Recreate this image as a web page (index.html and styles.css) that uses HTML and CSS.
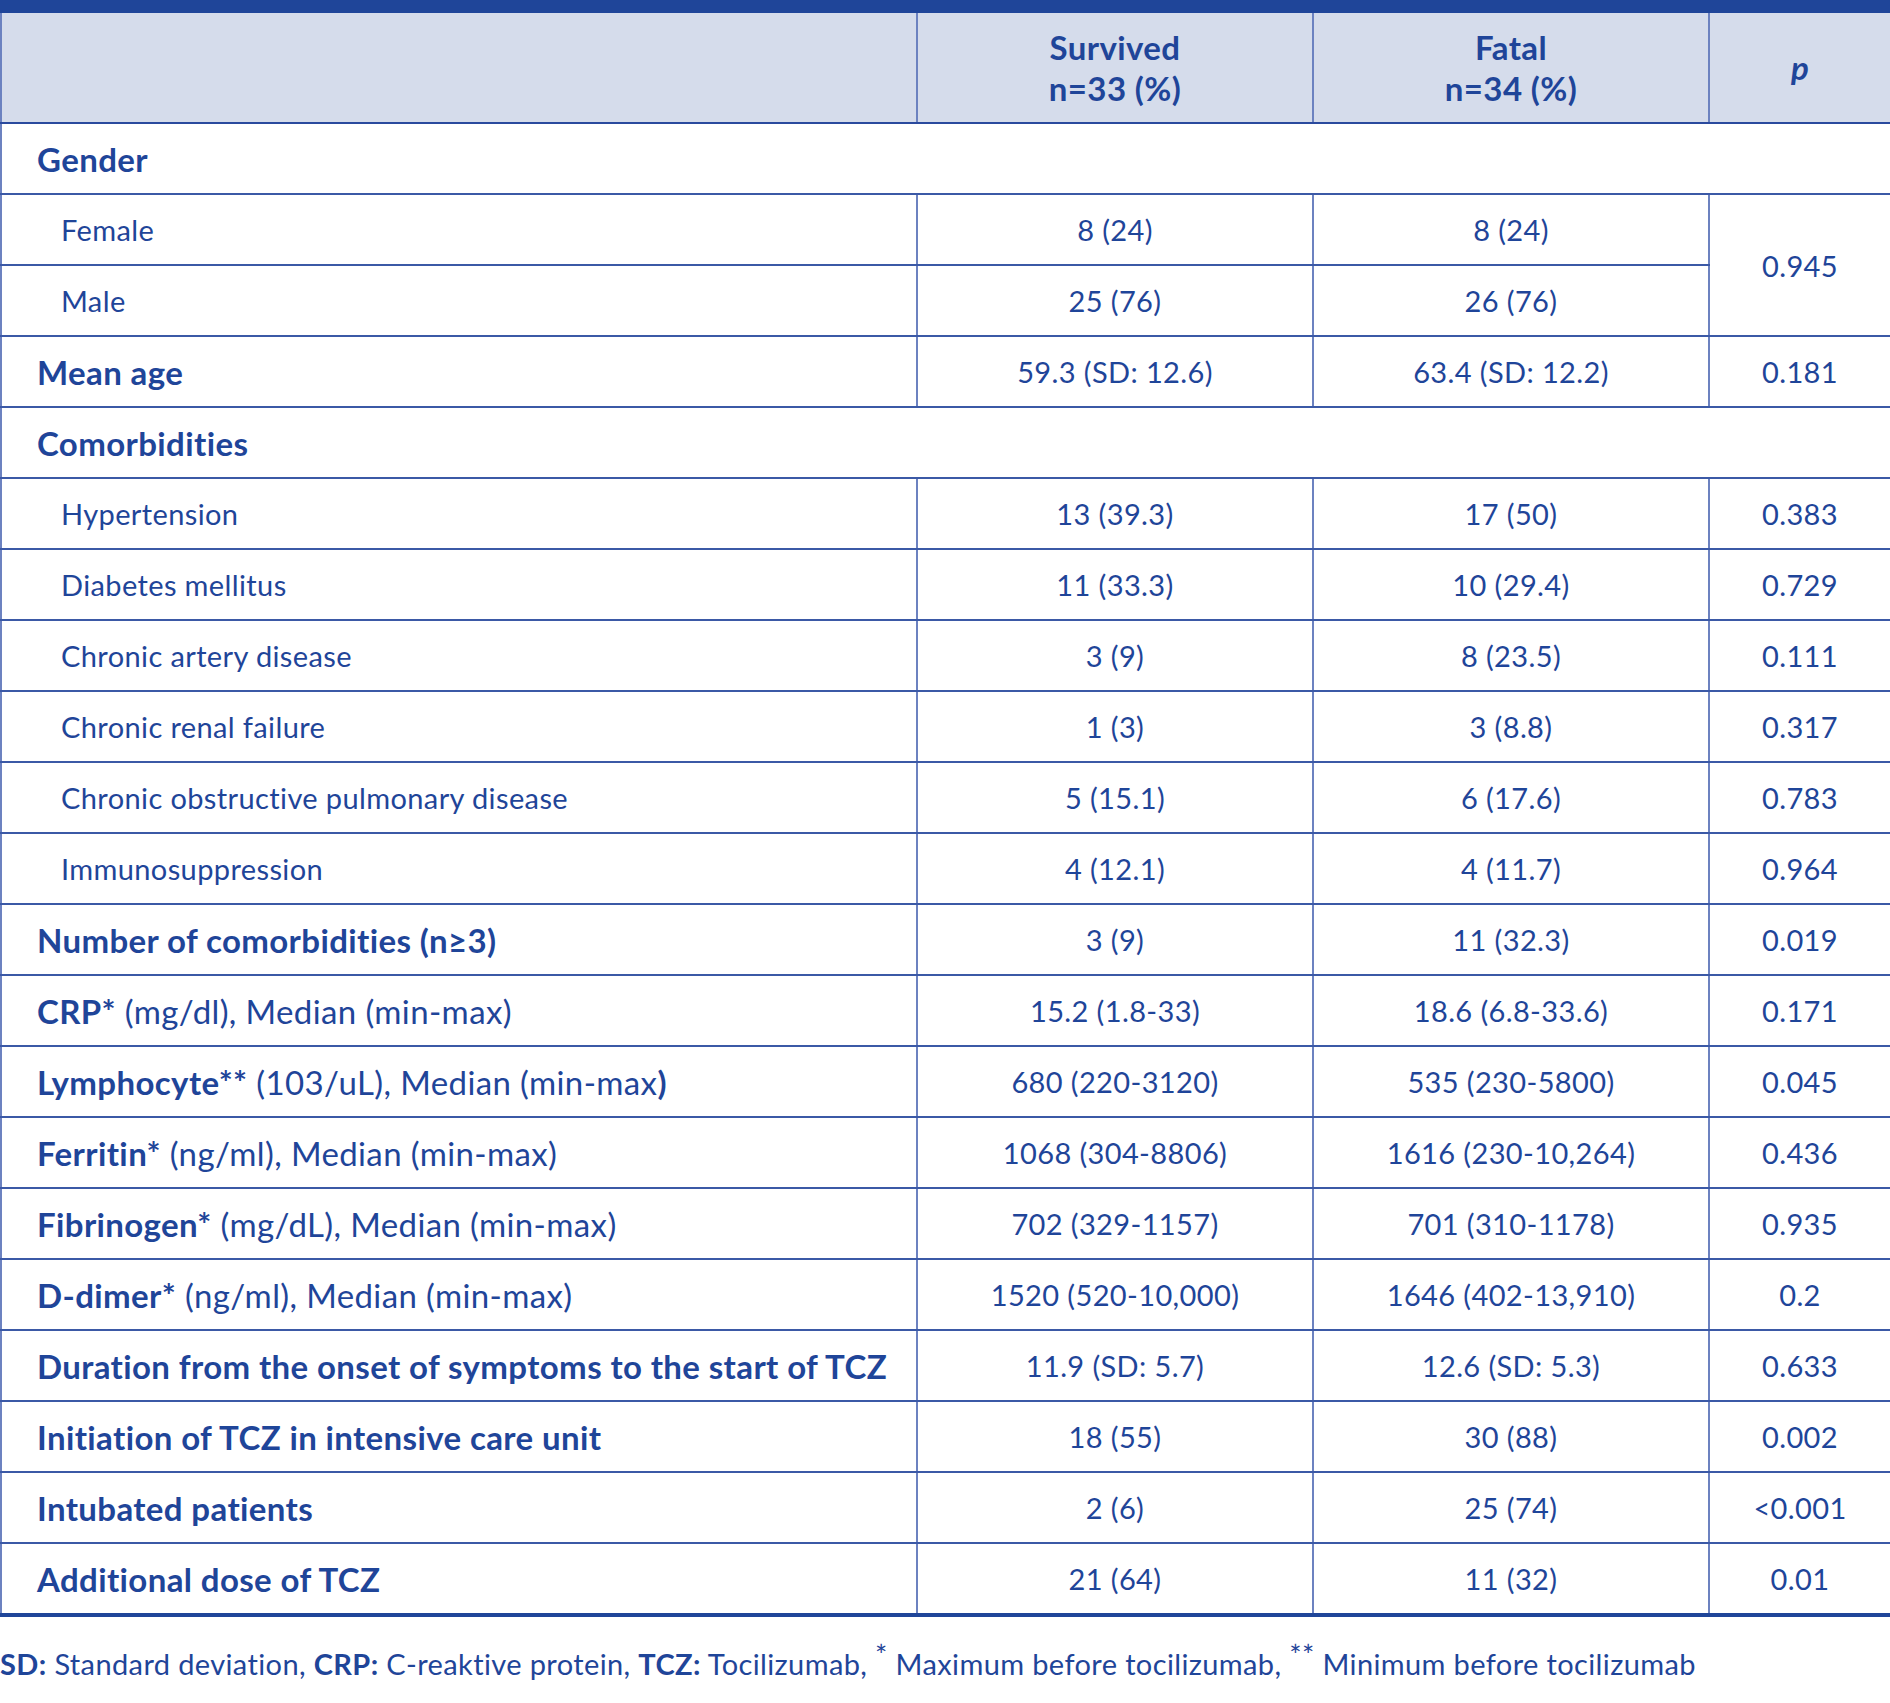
FILE: index.html
```html
<!DOCTYPE html>
<html lang="en">
<head>
<meta charset="utf-8">
<title>Table</title>
<link rel="stylesheet" href="styles.css">
</head>
<body>
<table class="tbl">
  <colgroup>
    <col class="c-label">
    <col class="c-val">
    <col class="c-val">
    <col class="c-p">
  </colgroup>
  <thead>
    <tr>
      <th></th>
      <th>Survived<br>n=33 (%)</th>
      <th>Fatal<br>n=34 (%)</th>
      <th><i>p</i></th>
    </tr>
  </thead>
  <tbody>
    <tr><td class="lbl b" colspan="4">Gender</td></tr>
    <tr><td class="lbl sub">Female</td><td>8 (24)</td><td>8 (24)</td><td rowspan="2">0.945</td></tr>
    <tr><td class="lbl sub">Male</td><td>25 (76)</td><td>26 (76)</td></tr>
    <tr><td class="lbl b">Mean age</td><td>59.3 (SD: 12.6)</td><td>63.4 (SD: 12.2)</td><td>0.181</td></tr>
    <tr><td class="lbl b" colspan="4">Comorbidities</td></tr>
    <tr><td class="lbl sub">Hypertension</td><td>13 (39.3)</td><td>17 (50)</td><td>0.383</td></tr>
    <tr><td class="lbl sub">Diabetes mellitus</td><td>11 (33.3)</td><td>10 (29.4)</td><td>0.729</td></tr>
    <tr><td class="lbl sub">Chronic artery disease</td><td>3 (9)</td><td>8 (23.5)</td><td>0.111</td></tr>
    <tr><td class="lbl sub">Chronic renal failure</td><td>1 (3)</td><td>3 (8.8)</td><td>0.317</td></tr>
    <tr><td class="lbl sub">Chronic obstructive pulmonary disease</td><td>5 (15.1)</td><td>6 (17.6)</td><td>0.783</td></tr>
    <tr><td class="lbl sub">Immunosuppression</td><td>4 (12.1)</td><td>4 (11.7)</td><td>0.964</td></tr>
    <tr><td class="lbl b">Number of comorbidities (n≥3)</td><td>3 (9)</td><td>11 (32.3)</td><td>0.019</td></tr>
    <tr><td class="lbl"><b>CRP*</b> (mg/dl), Median (min-max)</td><td>15.2 (1.8-33)</td><td>18.6 (6.8-33.6)</td><td>0.171</td></tr>
    <tr><td class="lbl"><b>Lymphocyte**</b> (103/uL), Median (min-max<b>)</b></td><td>680 (220-3120)</td><td>535 (230-5800)</td><td>0.045</td></tr>
    <tr><td class="lbl"><b>Ferritin*</b> (ng/ml), Median (min-max)</td><td>1068 (304-8806)</td><td>1616 (230-10,264)</td><td>0.436</td></tr>
    <tr><td class="lbl"><b>Fibrinogen*</b> (mg/dL), Median (min-max)</td><td>702 (329-1157)</td><td>701 (310-1178)</td><td>0.935</td></tr>
    <tr><td class="lbl"><b>D-dimer*</b> (ng/ml), Median (min-max)</td><td>1520 (520-10,000)</td><td>1646 (402-13,910)</td><td>0.2</td></tr>
    <tr><td class="lbl b">Duration from the onset of symptoms to the start of TCZ</td><td>11.9 (SD: 5.7)</td><td>12.6 (SD: 5.3)</td><td>0.633</td></tr>
    <tr><td class="lbl b">Initiation of TCZ in intensive care unit</td><td>18 (55)</td><td>30 (88)</td><td>0.002</td></tr>
    <tr><td class="lbl b">Intubated patients</td><td>2 (6)</td><td>25 (74)</td><td>&lt;0.001</td></tr>
    <tr class="last"><td class="lbl b">Additional dose of TCZ</td><td>21 (64)</td><td>11 (32)</td><td>0.01</td></tr>
  </tbody>
</table>
<p class="note"><b>SD:</b> Standard deviation, <b>CRP:</b> C-reaktive protein, <b>TCZ:</b> Tocilizumab, <sup>*</sup> Maximum before tocilizumab, <sup>**</sup> Minimum before tocilizumab</p>
</body>
</html>
```
FILE: styles.css
```css
html, body {
  margin: 0;
  padding: 0;
  background: #ffffff;
}
body {
  font-family: Lato, "Liberation Sans", sans-serif;
  color: #1f4599;
  width: 1890px;
  letter-spacing: 0.38px;
}
.tbl {
  border-collapse: collapse;
  width: 1890px;
  table-layout: fixed;
}
.c-label { width: 916px; }
.c-val { width: 396px; }
.c-p { width: 182px; }
.tbl th {
  background: #d5dceb;
  border-top: 13px solid #1f4599;
  border-bottom: 2px solid #2a4a9e;
  border-left: 2px solid #6c82c0;
  border-right: 2px solid #6c82c0;
  height: 109px;
  padding: 0;
  font-size: 33px;
  font-weight: 700;
  line-height: 41px;
  text-align: center;
  vertical-align: middle;
}
.tbl th i {
  font-weight: 700;
}
.tbl td {
  height: 69px;
  padding: 0;
  border: 2px solid #6c82c0;
  border-top: 2px solid #3b59a6;
  border-bottom: 2px solid #3b59a6;
  font-size: 29px;
  text-align: center;
  vertical-align: middle;
}
.tbl td.lbl {
  text-align: left;
  padding-left: 35px;
  font-size: 33px;
}
.tbl td.b {
  font-weight: 700;
}
.tbl td.sub {
  font-size: 29px;
  padding-left: 59px;
}
.tbl tr.last td {
  border-bottom: 4px solid #1f4599;
}
.note {
  margin: 29px 0 0 0;
  font-size: 29px;
  line-height: 35px;
}
.note sup {
  font-size: 29px;
  vertical-align: 0;
  position: relative;
  top: -9px;
}
```
